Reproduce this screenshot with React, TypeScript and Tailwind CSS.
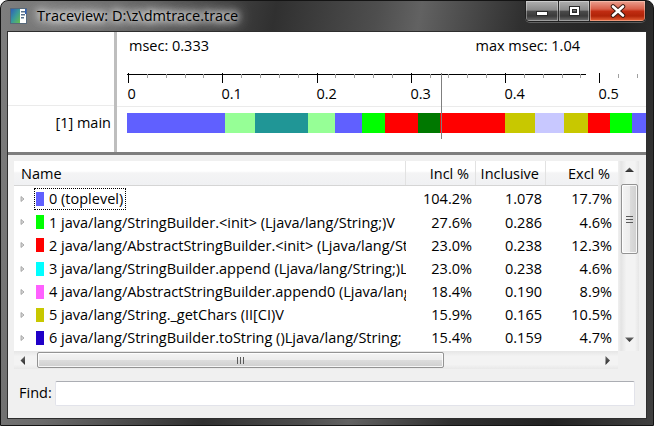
import React from 'react';

const rows = [
  { c: '#6060ff', n: '0 (toplevel)', a: '104.2%', b: '1.078', e: '17.7%' },
  { c: '#00ff00', n: '1 java/lang/StringBuilder.<init> (Ljava/lang/String;)V', a: '27.6%', b: '0.286', e: '4.6%' },
  { c: '#ff0000', n: '2 java/lang/AbstractStringBuilder.<init> (Ljava/lang/String;)V', a: '23.0%', b: '0.238', e: '12.3%' },
  { c: '#00ffff', n: '3 java/lang/StringBuilder.append (Ljava/lang/String;)Ljava/lang/StringBuilder;', a: '23.0%', b: '0.238', e: '4.6%' },
  { c: '#ff60ff', n: '4 java/lang/AbstractStringBuilder.append0 (Ljava/lang/String;)V', a: '18.4%', b: '0.190', e: '8.9%' },
  { c: '#c8c800', n: '5 java/lang/String._getChars (II[CI)V', a: '15.9%', b: '0.165', e: '10.5%' },
  { c: '#2000c8', n: '6 java/lang/StringBuilder.toString ()Ljava/lang/String;', a: '15.4%', b: '0.159', e: '4.7%' },
];

const segs: [number, number, string][] = [
  [10, 108, '#6060ff'],
  [108, 138, '#96ff96'],
  [138, 191, '#209696'],
  [191, 218, '#96ff96'],
  [218, 245, '#6060ff'],
  [245, 268, '#00ff00'],
  [268, 301, '#ff0000'],
  [301, 323, '#007800'],
  [323, 388, '#ff0000'],
  [388, 418, '#c8c800'],
  [418, 447, '#c8c8ff'],
  [447, 471, '#c8c800'],
  [471, 493, '#ff0000'],
  [493, 515, '#00ff00'],
  [515, 529, '#6060ff'],
];

function Ruler() {
  const major = 94.26;
  const minor = major / 5;
  const ticks: React.ReactNode[] = [];
  for (let i = 0; i < 6; i++) {
    for (let j = 0; j < 5; j++) {
      const x = Math.round(11 + major * i + minor * j) + 0.5;
      if (x > 528) continue;
      if (j === 0) {
        ticks.push(<line key={`t${i}${j}`} x1={x} x2={x} y1={13} y2={23} stroke="#000" strokeWidth={1} />);
      } else {
        ticks.push(<line key={`t${i}${j}`} x1={x} x2={x} y1={14} y2={18} stroke="#a0a0a0" strokeWidth={1} />);
      }
    }
  }
  const labels = ['0', '0.1', '0.2', '0.3', '0.4', '0.5'];
  return (
    <svg width={529} height={92} className="block">
      <line x1={10} x2={469} y1={14.5} y2={14.5} stroke="#000" strokeWidth={1} />
      {ticks}
      {labels.map((l, i) => (
        <text
          key={l}
          x={Math.round(11 + major * i) - 0.5}
          y={39}
          fontSize={14.5}
          fontFamily="'Open Sans', sans-serif"
          fill="#000"
        >
          {l}
        </text>
      ))}
      <line x1={0} x2={529} y1={46.5} y2={46.5} stroke="#ebebeb" strokeWidth={1} />
      {segs.map(([a, b, c], i) => (
        <rect key={i} x={a} y={53} width={b - a} height={20} fill={c} />
      ))}
      <line x1={324.5} x2={324.5} y1={13} y2={79} stroke="#7f7f7f" strokeWidth={1} />
    </svg>
  );
}

function Expander() {
  return (
    <svg width={5} height={8} className="block">
      <path d="M1 1.5 L4 4 L1 6.5 Z" fill="#d8d8d8" stroke="#9a9a9a" strokeWidth={0.8} />
    </svg>
  );
}

function Arrow({ dir }: { dir: 'up' | 'down' | 'left' | 'right' }) {
  const p =
    dir === 'up'
      ? 'M0 5 L4.5 0.5 L9 5 Z'
      : dir === 'down'
      ? 'M0 0.5 L4.5 5 L9 0.5 Z'
      : dir === 'left'
      ? 'M5 0 L0.5 4.5 L5 9 Z'
      : 'M0.5 0 L5 4.5 L0.5 9 Z';
  const horiz = dir === 'up' || dir === 'down';
  return (
    <svg width={horiz ? 9 : 6} height={horiz ? 6 : 9} className="block">
      <defs>
        <linearGradient id={`ag${dir}`} x1="0" y1="0" x2="0" y2="1">
          <stop offset="0" stopColor="#6a6a6a" />
          <stop offset="1" stopColor="#2a2a2a" />
        </linearGradient>
      </defs>
      <path d={p} fill={`url(#ag${dir})`} />
    </svg>
  );
}

function TitleIcon() {
  return (
    <svg width={17} height={16} className="block">
      <defs>
        <linearGradient id="tig" x1="0" y1="0" x2="1" y2="1">
          <stop offset="0" stopColor="#2f5fb8" />
          <stop offset="0.5" stopColor="#3a9a9a" />
          <stop offset="1" stopColor="#6ac04a" />
        </linearGradient>
      </defs>
      <rect x={0.5} y={0.5} width={16} height={15} fill="#fff" stroke="#56687a" />
      <rect x={1} y={1} width={9} height={14} fill="url(#tig)" />
      <rect x={11} y={3} width={4} height={1.5} fill="#58708a" />
      <rect x={11} y={6} width={4} height={1.5} fill="#58708a" />
      <rect x={11} y={9} width={3} height={1.5} fill="#58708a" />
      <rect x={15} y={1} width={1.5} height={5} fill="#2f5fb8" />
    </svg>
  );
}

function WindowButtons() {
  return (
    <div className="flex self-start mr-[7px] h-[21px] rounded-b-[5px] border border-t-0 border-[#202020] overflow-hidden shadow-[0_1px_0_rgba(255,255,255,0.25)]">
      <div className="w-[33px] h-full flex items-center justify-center border-r border-[#2a2a2a] shadow-[inset_0_0_0_1px_rgba(255,255,255,0.35)] bg-[linear-gradient(180deg,#b0b0b0_0%,#8a8a8a_45%,#4a4a4a_52%,#3a3a3a_75%,#707070_100%)]">
        <svg width={14} height={8} className="block mt-[4px]">
          <rect x={1.5} y={2.5} width={11} height={4} fill="#fff" stroke="#2a2a2a" />
        </svg>
      </div>
      <div className="w-[31px] h-full flex items-center justify-center border-r border-[#2a2a2a] shadow-[inset_0_0_0_1px_rgba(255,255,255,0.35)] bg-[linear-gradient(180deg,#b0b0b0_0%,#8a8a8a_45%,#4a4a4a_52%,#3a3a3a_75%,#707070_100%)]">
        <svg width={13} height={12} className="block">
          <rect x={1.5} y={1.5} width={10} height={9} fill="none" stroke="#2a2a2a" strokeWidth={1} />
          <rect x={3} y={3} width={7} height={6} fill="none" stroke="#fff" strokeWidth={2} />
          <rect x={4.5} y={4.5} width={4} height={3} fill="none" stroke="#2a2a2a" strokeWidth={1} />
        </svg>
      </div>
      <div className="w-[55px] h-full flex items-center justify-center shadow-[inset_0_0_0_1px_rgba(255,220,200,0.45)] bg-[linear-gradient(180deg,#eaa090_0%,#d8604a_40%,#c02c12_52%,#b02408_75%,#e8643a_100%)]">
        <svg width={16} height={14} className="block">
          <path d="M3 2.5 L13 11.5 M13 2.5 L3 11.5" stroke="#3a1a12" strokeWidth={4.5} strokeLinecap="round" />
          <path d="M3 2.5 L13 11.5 M13 2.5 L3 11.5" stroke="#fff" strokeWidth={2.6} strokeLinecap="round" />
        </svg>
      </div>
    </div>
  );
}

export default function App() {
  return (
    <div className="w-[654px] h-[426px] bg-white font-['Open_Sans','Noto_Sans',sans-serif] text-[14.5px] text-black leading-none">
      <div className="w-full h-full rounded-t-[8px] border border-[#141414] flex flex-col overflow-hidden bg-[linear-gradient(100deg,#7e7e7e_0%,#6a6a6a_16%,#303030_38%,#4e4e4e_52%,#626262_58%,#303030_72%,#222222_86%,#404040_100%)]">
        {/* title bar */}
        <div className="h-[30px] flex items-start shrink-0">
          <div className="h-[30px] flex items-center pl-[9px]">
            <TitleIcon />
            <span className="ml-[10px] text-[14.5px] text-black [text-shadow:0_0_6px_#fff,0_0_10px_#fff,0_0_14px_#fff,0_0_18px_#eee]">
              Traceview: D:\z\dmtrace.trace
            </span>
          </div>
          <div className="flex-1" />
          <WindowButtons />
        </div>

        {/* client */}
        <div className="flex-1 mx-[6px] mb-[6px] border border-[#2e2e2e] flex flex-col bg-[#f0f0f0] overflow-hidden">
          {/* timeline pane */}
          <div className="h-[120px] bg-white flex shrink-0">
            <div className="w-[106px] flex flex-col">
              <div className="h-[74px] border-b border-[#ebebeb]" />
              <div className="mt-[7px] h-[20px] leading-[20px] text-right pr-[3px] whitespace-nowrap">[1] main</div>
            </div>
            <div className="w-[3px] bg-[#bebebe]" />
            <div className="flex-1 flex flex-col">
              <div className="h-[28px] flex items-center justify-between pl-[12px] pr-[66px]">
                <span>msec: 0.333</span>
                <span>max msec: 1.04</span>
              </div>
              <Ruler />
            </div>
          </div>

          {/* sash */}
          <div className="h-[3px] bg-[#7e7e7e] shrink-0" />

          {/* bottom panel */}
          <div className="flex-1 flex flex-col pt-[6px] pl-[6px] pr-[7px]">
            <div className="h-[208px] flex flex-col bg-white">
              <div className="flex h-[190px]">
                <div className="flex-1 flex flex-col overflow-hidden">
                  {/* header */}
                  <div className="flex h-[25px] shrink-0 border-b border-[#d5d5d5] bg-[linear-gradient(180deg,#ffffff_0%,#ffffff_42%,#f4f4f5_50%,#f0f1f3_100%)]">
                    <div className="w-[392px] shrink-0 border-r border-[#e2e2e2] pl-[7px] flex items-center pt-[2px]">Name</div>
                    <div className="w-[70px] shrink-0 border-r border-[#e2e2e2] pr-[6px] flex items-center justify-end pt-[2px] whitespace-nowrap">Incl %</div>
                    <div className="w-[70px] shrink-0 border-r border-[#e2e2e2] pr-[6px] flex items-center justify-end pt-[2px] whitespace-nowrap">Inclusive</div>
                    <div className="w-[70px] shrink-0 pr-[6px] flex items-center justify-end pt-[2px] whitespace-nowrap">Excl %</div>
                    <div className="flex-1" />
                  </div>
                  {/* rows */}
                  <div className="flex flex-col pt-[1.5px]">
                    {rows.map((r, i) => (
                      <div key={i} className="flex h-[23.2px] items-center shrink-0">
                        <div className="w-[392px] shrink-0 flex items-center overflow-hidden whitespace-nowrap pl-[6px]">
                          <div className="w-[14px] shrink-0 flex items-center">
                            <Expander />
                          </div>
                          <div
                            className={
                              i === 0
                                ? 'flex items-center h-[22px] px-[1px] border border-dotted border-black'
                                : 'flex items-center h-[22px] px-[1px] border border-dotted border-transparent'
                            }
                          >
                            <div className="w-[8px] h-[14px] shrink-0" style={{ backgroundColor: r.c }} />
                            <span className="ml-[5px] pr-[1px] pt-[1px]">{r.n}</span>
                          </div>
                        </div>
                        <div className="w-[70px] shrink-0 text-right pr-[4px] pt-[1px]">{r.a}</div>
                        <div className="w-[70px] shrink-0 text-right pr-[4px] pt-[1px]">{r.b}</div>
                        <div className="w-[70px] shrink-0 text-right pr-[4px] pt-[1px]">{r.e}</div>
                      </div>
                    ))}
                  </div>
                </div>
                {/* vertical scrollbar */}
                <div className="w-[21px] shrink-0 flex flex-col bg-[linear-gradient(90deg,#f0f0f0_0%,#e4e4e4_15%,#f3f3f3_40%,#f3f3f3_80%,#e6e6e6_100%)]">
                  <div className="h-[17px] flex items-center justify-center pl-[2px]">
                    <Arrow dir="up" />
                  </div>
                  <div className="h-[6px]" />
                  <div className="h-[70px] ml-[3px] mr-[1px] rounded-[2px] border border-[#939393] shadow-[inset_0_0_0_1px_rgba(255,255,255,0.8)] bg-[linear-gradient(90deg,#f4f4f4_0%,#ececec_50%,#dcdcdc_52%,#cfcfcf_100%)] flex flex-col items-center justify-center gap-[2px]">
                    <div className="w-[7px] h-[1px] bg-[#5a5a5a]" />
                    <div className="w-[7px] h-[1px] bg-[#5a5a5a]" />
                    <div className="w-[7px] h-[1px] bg-[#5a5a5a]" />
                  </div>
                  <div className="flex-1" />
                  <div className="h-[17px] flex items-center justify-center pl-[2px]">
                    <Arrow dir="down" />
                  </div>
                  <div className="h-[3px]" />
                </div>
              </div>
              {/* horizontal scrollbar */}
              <div className="h-[18px] flex">
                <div className="flex-1 flex items-stretch bg-[linear-gradient(180deg,#e6e6e6_0%,#f3f3f3_30%,#f3f3f3_75%,#e8e8e8_100%)]">
                  <div className="w-[17px] flex items-center justify-center">
                    <Arrow dir="left" />
                  </div>
                  <div className="w-[6px]" />
                  <div className="w-[407px] my-[1px] rounded-[2px] border border-[#939393] shadow-[inset_0_0_0_1px_rgba(255,255,255,0.8)] bg-[linear-gradient(180deg,#f4f4f4_0%,#ececec_50%,#dcdcdc_52%,#cfcfcf_100%)] flex items-center justify-center gap-[2px]">
                    <div className="w-[1px] h-[7px] bg-[#5a5a5a]" />
                    <div className="w-[1px] h-[7px] bg-[#5a5a5a]" />
                    <div className="w-[1px] h-[7px] bg-[#5a5a5a]" />
                  </div>
                  <div className="flex-1" />
                  <div className="w-[17px] flex items-center justify-center mr-[2px]">
                    <Arrow dir="right" />
                  </div>
                </div>
                <div className="w-[21px] bg-[#f0f0f0]" />
              </div>
            </div>

            {/* find */}
            <div className="mt-[12px] h-[25px] flex items-center">
              <div className="w-[41px] pl-[5px]">Find:</div>
              <div className="flex-1 h-[25px] mr-[4px] rounded-[2px] bg-white border border-[#e2e3ea] border-t-[#abadb3]" />
            </div>
          </div>
        </div>
      </div>
    </div>
  );
}
